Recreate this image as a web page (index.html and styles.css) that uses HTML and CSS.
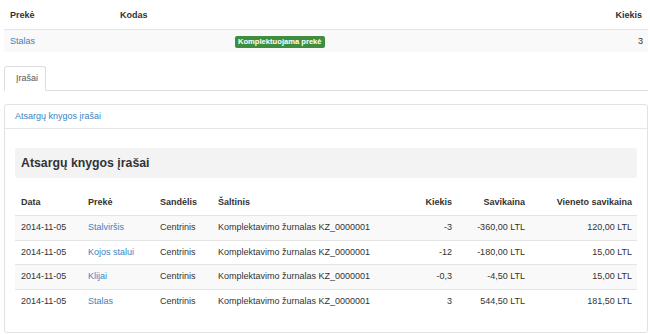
FILE: index.html
```html
<!DOCTYPE html>
<html lang="lt">
<head>
    <meta charset="UTF-8">
    <title>Atsargų knygos įrašai</title>
    <link rel="stylesheet" href="styles.css">
</head>
<body>

    <table class="product-table">
        <thead>
            <tr>
                <th class="col-name">Prekė</th>
                <th class="col-code">Kodas</th>
                <th></th>
                <th class="num">Kiekis</th>
            </tr>
        </thead>
        <tbody>
            <tr>
                <td><a href="#">Stalas</a></td>
                <td></td>
                <td><span class="label-success">Komplektuojama prekė</span></td>
                <td class="num">3</td>
            </tr>
        </tbody>
    </table>

    <ul class="nav-tabs">
        <li class="active"><a href="#">Įrašai</a></li>
    </ul>

    <div class="panel">
        <div class="panel-heading"><a href="#">Atsargų knygos įrašai</a></div>
        <div class="panel-body">
            <div class="well">
                <h3>Atsargų knygos įrašai</h3>
            </div>

            <table class="entries">
                <colgroup>
                    <col class="w-date">
                    <col class="w-item">
                    <col class="w-store">
                    <col>
                    <col class="w-qty">
                    <col class="w-cost">
                    <col class="w-unit">
                </colgroup>
                <thead>
                    <tr>
                        <th>Data</th>
                        <th>Prekė</th>
                        <th>Sandėlis</th>
                        <th>Šaltinis</th>
                        <th class="num">Kiekis</th>
                        <th class="num">Savikaina</th>
                        <th class="num">Vieneto savikaina</th>
                    </tr>
                </thead>
                <tbody>
                    <tr>
                        <td>2014-11-05</td>
                        <td><a href="#">Stalviršis</a></td>
                        <td>Centrinis</td>
                        <td>Komplektavimo žurnalas KZ_0000001</td>
                        <td class="num">-3</td>
                        <td class="num">-360,00 LTL</td>
                        <td class="num">120,00 LTL</td>
                    </tr>
                    <tr>
                        <td>2014-11-05</td>
                        <td><a href="#">Kojos stalui</a></td>
                        <td>Centrinis</td>
                        <td>Komplektavimo žurnalas KZ_0000001</td>
                        <td class="num">-12</td>
                        <td class="num">-180,00 LTL</td>
                        <td class="num">15,00 LTL</td>
                    </tr>
                    <tr>
                        <td>2014-11-05</td>
                        <td><a href="#">Klijai</a></td>
                        <td>Centrinis</td>
                        <td>Komplektavimo žurnalas KZ_0000001</td>
                        <td class="num">-0,3</td>
                        <td class="num">-4,50 LTL</td>
                        <td class="num">15,00 LTL</td>
                    </tr>
                    <tr>
                        <td>2014-11-05</td>
                        <td><a href="#">Stalas</a></td>
                        <td>Centrinis</td>
                        <td>Komplektavimo žurnalas KZ_0000001</td>
                        <td class="num">3</td>
                        <td class="num">544,50 LTL</td>
                        <td class="num">181,50 LTL</td>
                    </tr>
                </tbody>
            </table>
        </div>
    </div>

</body>
</html>
```

FILE: styles.css
```css
body {
    font-family: 'Liberation Sans', Arial, sans-serif;
    font-size: 9px;
    line-height: 13px;
    color: #333;
    margin: 0;
    padding: 0 2px 0 4px;
    background-color: #fff;
}

a {
    color: #3a83c2;
    text-decoration: none;
}

table {
    width: 100%;
    border-collapse: collapse;
    border-spacing: 0;
}

th {
    text-align: left;
    font-weight: bold;
}

.num {
    text-align: right;
}

/* top product table */
.product-table th {
    padding: 9px 6px 7px;
    border-bottom: 1px solid #e4e4e4;
}

.product-table td {
    padding: 5px 5px 4px 6px;
    background-color: #f9f9f9;
}

.product-table .col-name {
    width: 98px;
}

.product-table .col-code {
    width: 103px;
}

.label-success {
    display: inline-block;
    background-color: #3f8e3f;
    color: #fff;
    font-size: 7.6px;
    font-weight: bold;
    line-height: 12px;
    padding: 0 3px;
    border-radius: 2px;
}

/* tabs */
.nav-tabs {
    list-style: none;
    margin: 14px 0 0;
    padding: 0;
    display: flex;
    border-bottom: 1px solid #ddd;
}

.nav-tabs li {
    margin-bottom: -1px;
}

.nav-tabs a {
    display: block;
    padding: 5px 7px 5px 11px;
    line-height: 13px;
    color: #555;
    border: 1px solid #ddd;
    border-bottom-color: #fff;
    border-radius: 3px 3px 0 0;
    background-color: #fff;
}

/* panel */
.panel {
    margin-top: 13px;
    border: 1px solid #e2e2e2;
    border-radius: 3px;
}

.panel-heading {
    padding: 5px 10px;
    border-bottom: 1px solid #e6e6e6;
}

.panel-body {
    padding: 19px 10px 9px;
}

.well {
    background-color: #f3f3f3;
    border-radius: 3px;
    padding: 0 6px;
}

.well h3 {
    margin: 0;
    font-size: 12.3px;
    line-height: 30px;
}

.entries {
    table-layout: fixed;
    margin: 10px 0;
}

.entries .w-date { width: 67px; }
.entries .w-item { width: 72px; }
.entries .w-store { width: 58px; }
.entries .w-qty { width: 60px; }
.entries .w-cost { width: 73px; }
.entries .w-unit { width: 106px; }

.entries th {
    padding: 8px 6px 6px;
    border-bottom: 1px solid #e4e4e4;
}

.entries td {
    padding: 5px 6px;
    line-height: 13.5px;
    border-top: 1px solid #e4e4e4;
    white-space: nowrap;
}

.entries th:last-child,
.entries td:last-child {
    padding-right: 5px;
}

.entries tbody tr:nth-child(odd) td {
    background-color: #f9f9f9;
}
```
